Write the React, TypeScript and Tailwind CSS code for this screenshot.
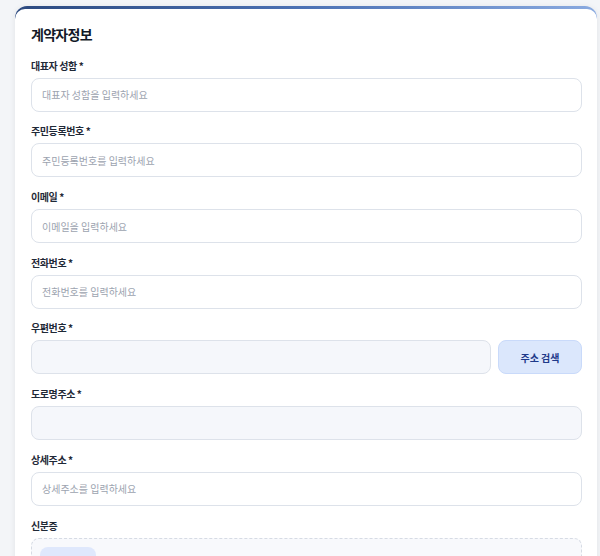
import React from "react";

const font = { fontFamily: '"Noto Sans CJK KR", "Noto Sans", sans-serif' };

function Field({ label, placeholder, disabled }: { label: string; placeholder?: string; disabled?: boolean }) {
  return (
    <div className="flex flex-col gap-1">
      <label className="text-[10px] leading-4 font-bold tracking-[-0.04em] text-[#1f2937]">{label}</label>
      <input
        readOnly
        placeholder={placeholder}
        className={`h-[34px] w-full rounded-lg border border-[#dde2ea] px-2.5 text-[10px] outline-none placeholder:text-[#9ca3af] ${disabled ? "bg-[#f5f7fb]" : "bg-white"}`}
      />
    </div>
  );
}

export default function App() {
  return (
    <div className="h-[556px] w-[600px] overflow-hidden bg-[#f3f5f8] pl-[15px] pr-[3px] pt-[6px]" style={font}>
      <div className="rounded-t-xl bg-gradient-to-r from-[#2c4a80] via-[#4c72b5] to-[#8aaae0] pt-[3px] shadow-[0_1px_6px_rgba(0,0,0,0.08)]">
        <div className="flex flex-col gap-[11.7px] rounded-t-[10px] bg-white pl-4 pr-[15px] pt-[13px] pb-4">
          <h2 className="text-[14px] leading-6 font-bold tracking-[-0.05em] text-[#111827]">계약자정보</h2>
          <Field label="대표자 성함 *" placeholder="대표자 성함을 입력하세요" />
          <Field label="주민등록번호 *" placeholder="주민등록번호를 입력하세요" />
          <Field label="이메일 *" placeholder="이메일을 입력하세요" />
          <Field label="전화번호 *" placeholder="전화번호를 입력하세요" />
          <div className="flex flex-col gap-1">
            <label className="text-[10px] leading-4 font-bold tracking-[-0.04em] text-[#1f2937]">우편번호 *</label>
            <div className="flex gap-[7px]">
              <input readOnly className="h-[34px] flex-1 rounded-lg border border-[#dde2ea] bg-[#f5f7fb] px-2.5 text-[10px] outline-none" />
              <button className="h-[34px] w-[84px] rounded-lg border border-[#c9dafa] bg-[#dbe7fc] text-[10px] font-bold text-[#1e3a8a]">
                주소 검색
              </button>
            </div>
          </div>
          <Field label="도로명주소 *" disabled />
          <Field label="상세주소 *" placeholder="상세주소를 입력하세요" />
          <div className="flex flex-col gap-1">
            <label className="text-[10px] leading-4 font-bold tracking-[-0.04em] text-[#1f2937]">신분증</label>
            <div className="h-[60px] rounded-lg border border-dashed border-[#d6dbe4] bg-[#f8f9fc] p-2">
              <div className="h-[30px] w-[56px] rounded-lg bg-[#dfe8fc]" />
            </div>
          </div>
        </div>
      </div>
    </div>
  );
}
